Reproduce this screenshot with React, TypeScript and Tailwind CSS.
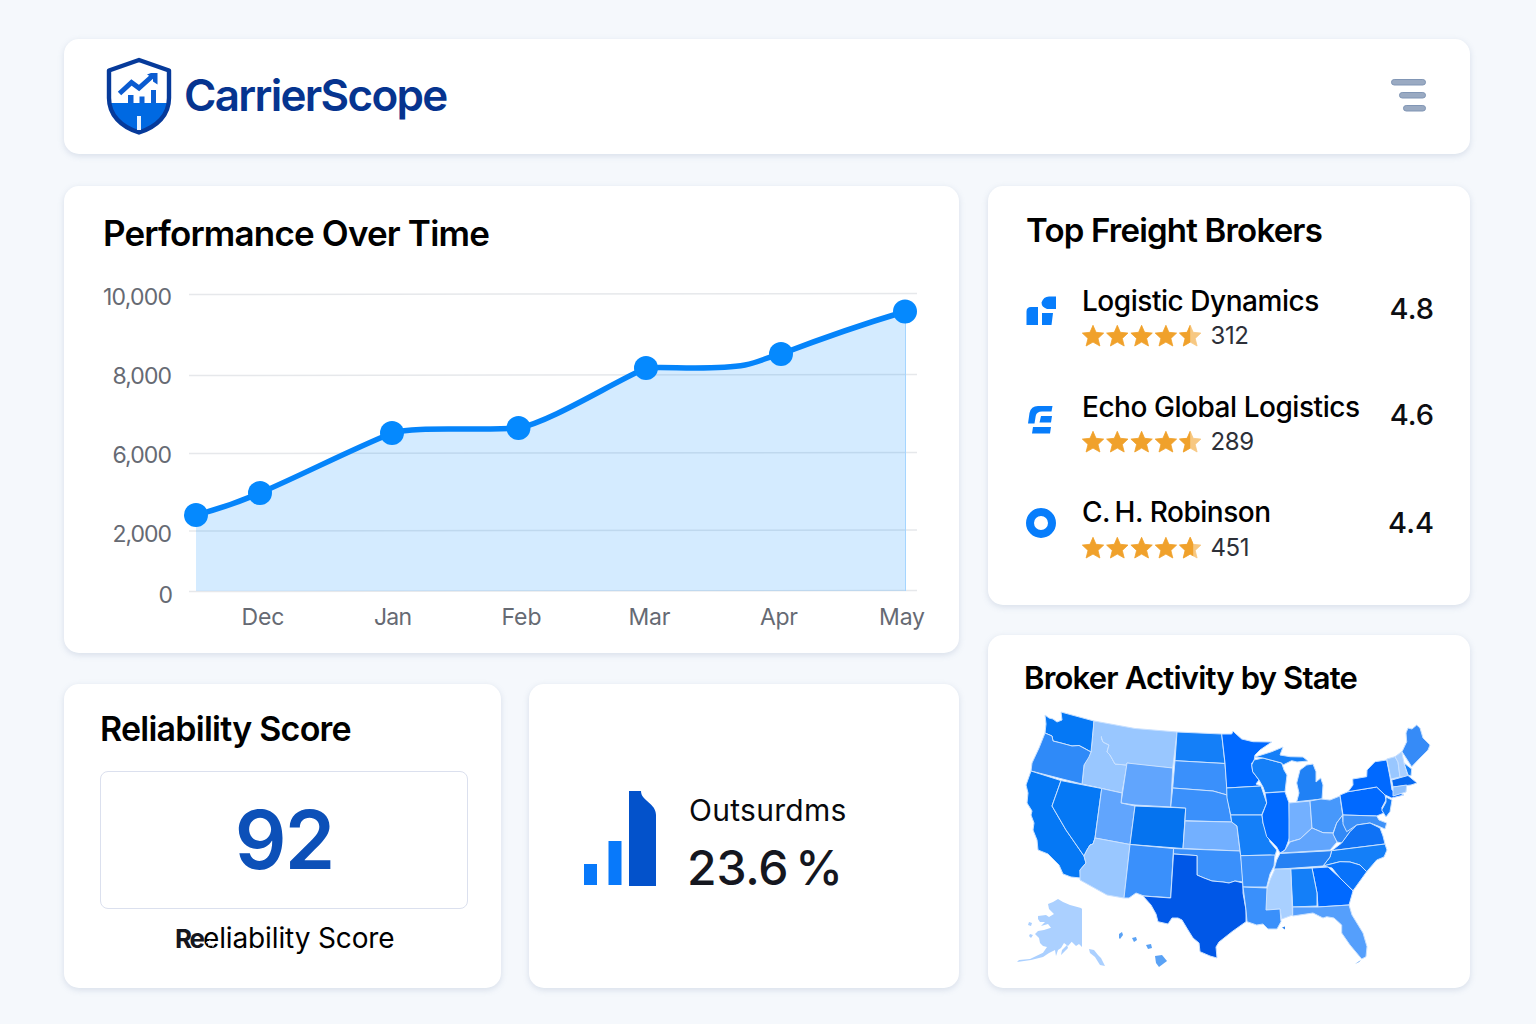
import React from "react";

const TICKS = [
  { label: "10,000", y: 305, w: 69, x: 103, line: 294.5 },
  { label: "8,000", y: 384, w: 59.5, x: 112.5, line: 375.5 },
  { label: "6,000", y: 463, w: 59.5, x: 112.5, line: 453.5 },
  { label: "2,000", y: 541.5, w: 59.5, x: 112.5, line: 531 },
  { label: "0", y: 603, w: 13.5, x: 158.5, line: 591.5 },
];
const MONTHS = [
  { label: "Dec", x: 263, w: 43 },
  { label: "Jan", x: 393, w: 38 },
  { label: "Feb", x: 521.5, w: 40 },
  { label: "Mar", x: 649.5, w: 42 },
  { label: "Apr", x: 779, w: 38 },
  { label: "May", x: 902, w: 46 },
];
const POINTS = [
  [196, 515],
  [260, 493],
  [392, 433],
  [518.5, 428],
  [646, 368],
  [781, 354],
  [905, 311.5],
];
const CURVE =
  "M196 515C219 509 239 502 260 493C306 473 346 452 392 433C418 426 464 431 518.5 428C550 422 612 383 646 368C664 366 712 371 745 365C760 362 770 356 781 354C815 341 870 322 905 311.5";

const LIGHT = "#99c7ff";
const SOFT = "#61a5fd";
const MID = "#3a90fb";
const STRONG = "#147ff8";
const BRIGHT = "#0069ff";

type Region = { id: string; fill: string; d: string };
const STATES: Region[] = [
  { id: "WA", fill: "#0578f5", d: "1045,715 1049,718 1053,719 1057,722 1062,720 1061,712 1094,721 1091,752 1084,748 1079,745.5 1072,746 1061,743 1053,741 1052,736 1045,733 1046,724" },
  { id: "OR", fill: "#2f8af8", d: "1045,733 1052,736 1053,741 1061,743 1072,746 1079,745.5 1091,752 1089,757 1084,765 1082,784 1031,771 1032,763 1039,748" },
  { id: "CA", fill: "#0578f5", d: "1031,771 1061,780.6 1052,806 1066,830 1084,856 1086,863 1080,870 1080.7,878 1071,877 1063,874 1059,865 1048,854 1038,850 1037,840 1033,830 1034,823 1031,815 1032,811 1027,803 1028,793 1026,785" },
  { id: "NV", fill: "#0578f5", d: "1061,780.6 1101.7,788.5 1095,838 1093,844 1090,845 1087,850 1084,856 1066,830 1052,806" },
  { id: "MT", fill: LIGHT, d: "1094,721 1135,728.5 1177,732 1172.7,768 1140,765 1127,763 1126,765 1115,764 1110,755 1107,752 1109,745 1103,742 1101,736 1093,735" },
  { id: "WY", fill: SOFT, d: "1127,763 1172.7,768 1170.7,807 1135,805 1121,803" },
  { id: "UT", fill: SOFT, d: "1101.7,788.5 1122,793 1121,803 1135,806 1130,844.5 1095,838" },
  { id: "CO", fill: "#0573ef", d: "1135,806 1185.7,808 1183,848.5 1130,844.5" },
  { id: "AZ", fill: LIGHT, d: "1095,838 1130,844.5 1124,898 1107,895 1080,880 1080,870 1086,863 1084,856 1087,850 1090,845 1093,844" },
  { id: "NM", fill: MID, d: "1130,844.5 1173.5,848.5 1170.7,897.7 1144,896 1136,893 1129,898 1124,898" },
  { id: "ND", fill: STRONG, d: "1177,732 1221.7,734 1225,763.5 1175,760.7" },
  { id: "SD", fill: MID, d: "1175,760.7 1225,763.5 1227,788 1227,795 1213,791 1172.7,788" },
  { id: "NE", fill: MID, d: "1172.7,788 1213,791 1227,795 1231.7,822 1185,820.7 1185.7,808 1170.7,807" },
  { id: "KS", fill: "#73b0ff", d: "1185,821 1231.7,822 1237,826 1240,851 1183,848.5" },
  { id: "OK", fill: MID, d: "1173.5,848.5 1240,851 1241.7,863 1243,882 1235,881 1229,883 1223,882 1212,881 1204,878 1197,875 1197,855.6 1173.5,854" },
  { id: "TX", fill: "#0057e7", d: "1173.5,854 1197,855.6 1197,875 1204,878 1212,881 1223,882 1229,883 1235,881 1243,883 1243,893 1246,910 1246,921.7 1232,931.7 1219,942 1216,947 1217,958 1210,956 1200,951.7 1199,943 1193,938 1188,930 1182,920 1178,918 1172,918 1168,924 1158,921.7 1156,914 1151,905 1143,896 1170.7,898" },
  { id: "MN", fill: BRIGHT, d: "1221.7,734 1231.7,734 1233,731 1235,733 1241.7,739 1253,741.7 1271.7,742 1260,750 1255,755 1254,761 1251.7,763 1252.7,771.7 1259,780 1256,784 1261,786 1226.7,788 1225,763" },
  { id: "WI", fill: STRONG, d: "1254,760 1263,758 1281.7,763 1284,770 1287,775 1285,791.7 1265,792.7 1263,787 1259,780 1252.7,771.7 1251.7,765" },
  { id: "UP", fill: STRONG, d: "1255,757 1271.7,751.7 1283,747 1280,755 1290,756.7 1303,757 1308,761 1297,762 1291.7,760.7 1283,765 1281.7,763 1263,758" },
  { id: "MI", fill: "#2081f5", d: "1306.7,765 1313,764 1316,771.7 1316,782 1320.7,778 1323,785 1322,799 1296.7,801.7 1299,793 1296.7,783 1300,770" },
  { id: "IA", fill: STRONG, d: "1226.7,788 1261,786 1264,795 1266.7,803 1261.7,815 1230.7,815 1227,798" },
  { id: "MO", fill: STRONG, d: "1230.7,815 1262,815 1263,823 1267,833 1270,842 1276.7,850 1275,856 1270,855 1240.7,855.7 1237,826 1231.7,822" },
  { id: "IL", fill: BRIGHT, d: "1265,793 1285,791.7 1289,803 1290,836.7 1285,850 1280,853 1276.7,847 1266.7,836.7 1263,823 1262,815 1266.7,803" },
  { id: "IN", fill: "#73b0ff", d: "1289,803 1310,801 1312,828 1300,839 1289,842" },
  { id: "OH", fill: "#4798fb", d: "1310,801 1321,799 1330,800 1340,796 1342.7,815 1336.7,823 1333,833 1323,832.7 1312,828" },
  { id: "KY", fill: SOFT, d: "1285,850 1290,842 1300,839 1312,828 1323,832.7 1333,833 1337,842 1330,850 1281,853" },
  { id: "WV", fill: "#3289f6", d: "1342.7,815 1343,822 1349,820 1356.7,825 1350,831.7 1342,843 1337,842 1333,834 1336.7,823" },
  { id: "PA", fill: BRIGHT, d: "1340,795 1348,791.7 1376.7,787 1385,795 1386,800 1381.7,808 1384,813 1376.7,816 1343,815" },
  { id: "NY", fill: BRIGHT, d: "1348,791.7 1353,785 1352.7,779 1366.7,776.7 1367,770 1375,761.7 1386.7,760 1390,777 1392,790 1404,795 1391.7,798 1385,795 1376.7,787" },
  { id: "NJ", fill: "#0f78f8", d: "1386,797 1392,800 1390,811.7 1386,817 1381.7,810 1386,802" },
  { id: "VT", fill: LIGHT, d: "1386.7,759 1395,756.7 1398,762 1400,777 1391,779" },
  { id: "NH", fill: "#a9cfff", d: "1395,756.7 1401.7,751.7 1404,763 1408,776.7 1400,777 1398,762" },
  { id: "ME", fill: "#368bf7", d: "1402,751.7 1406.7,741.7 1406,733 1408,728 1412,729 1416.7,725 1420,728 1423,738 1430,745 1428,750 1420,758 1411.7,766.7" },
  { id: "NHC", fill: STRONG, d: "1404,763 1411.7,769 1411,776 1408,775" },
  { id: "MA", fill: "#0668f0", d: "1391.7,780 1408,775.5 1411,778 1417,783 1411,785 1393,787" },
  { id: "CT", fill: "#8fc0fc", d: "1393,787 1406.7,785 1406,792 1393,796" },
  { id: "MD", fill: "#3e91f8", d: "1343,815 1376.7,816 1379,820 1386.7,823 1385,829 1378,826 1370,823 1356.7,825 1346.7,831.7 1343,824" },
  { id: "VA", fill: "#0f72f5", d: "1331.7,850.7 1341.7,843 1350,831.7 1356.7,825 1370,823 1380,828 1383,836 1385,844" },
  { id: "NC", fill: STRONG, d: "1331.7,850.7 1385,844 1387,850 1384,857 1376.7,860 1366.7,871.7 1360,865 1350,862 1340,861.7 1323,866 1330,857" },
  { id: "TN", fill: "#2681f3", d: "1280,853.5 1331.7,850.7 1330,857 1323,866 1274,869.5 1276.7,860" },
  { id: "SC", fill: "#0872fa", d: "1323,866 1340,861.7 1350,862 1360,865 1366.7,871.7 1353,890.7 1340,878 1332,868" },
  { id: "GA", fill: BRIGHT, d: "1312,868 1328,867 1340,878 1353,891 1349,905 1318,907 1317,893" },
  { id: "AL", fill: STRONG, d: "1290.7,869 1312,868 1317,893 1317,906 1292.7,907" },
  { id: "FL", fill: "#559ffc", d: "1292.7,907 1318,907 1349,905 1352,915 1363,933 1367,946.7 1366,956.7 1361.7,959 1350,945 1341.7,933 1341.7,925 1334,918 1326.7,916.7 1323,918 1313,913 1292.7,916" },
  { id: "MS", fill: "#a9d0ff", d: "1275,869 1290.7,869 1292.5,915 1281.7,919 1280,909 1266,910 1266.7,890 1270,880" },
  { id: "AR", fill: MID, d: "1240.7,855.7 1275,855 1274,866 1270,874 1266.7,887 1243,887" },
  { id: "LA", fill: MID, d: "1243,887 1267,888 1266,910 1280,909 1281,921.7 1277,929 1268,929 1263,924 1256.7,925 1247,921.7 1246,910" },
];

const ALASKA =
  "1048,904 1053,902 1058,899 1063,902 1070,905 1081,908 1082,909 1082,947 1079,944 1076,946 1071.7,941.7 1068,946 1064,943 1061,948 1058,950 1056,956 1055,950 1049,953 1043,957 1031,960 1017,962 1019,960 1030,959 1043,952.7 1047,947 1043,946 1040,943 1039,938 1035,934 1038,931 1044,930 1051,927.7 1048,924 1041,926 1045,922 1040,922 1038,919 1038,916 1046,915 1049,917 1054,914 1049,909";

const STAR =
  "M11 0.3L14 7.3L21.7 8.1L16 13.400L17.900 21L11 17.100L4.100 21L6 13.400L0.3 8.100L8 7.300Z";

const CARD =
  "rounded-[15px] bg-white shadow-[0_2px_6px_rgba(110,130,170,0.22)]";

function Stars({ cut }: { cut: number }) {
  return (
    <svg width="120" height="22" viewBox="0 0 120 22" className="shrink-0">
      {[0, 1, 2, 3].map((i) => (
        <path key={i} d={STAR} fill="#f0a12b" stroke="#f0a12b" strokeWidth="0.800" transform={`translate(${i * 24.3} 0)`} />
      ))}
      <g transform="translate(97.2 0)">
        <path d={STAR} fill="#f7c882" stroke="#f7c882" strokeWidth="0.800" />
        <svg width={cut} height="22">
          <path d={STAR} fill="#f0a12b" stroke="#f0a12b" strokeWidth="0.800" />
        </svg>
      </g>
    </svg>
  );
}

function Shield() {
  return (
    <svg width="66" height="78" viewBox="106 57 66 78" className="shrink-0">
      <path d="M139 60L169 70.500V98C169 115 157 127 139 132.500C121 127 109 115 109 98V70.500Z" fill="#fff" />
      <path d="M109 103H169C167 117 156 127 139 132C122 127 111 117 109 103Z" fill="#0069e2" />
      <path d="M139 60L169 70.500V98C169 115 157 127 139 132.500C121 127 109 115 109 98V70.500Z" fill="none" stroke="#063a9a" strokeWidth="4.400" strokeLinejoin="round" />
      <path d="M119.500 93.500L131.500 82.500L139 88L153 75.500" fill="none" stroke="#0b5bd0" strokeWidth="5" />
      <path d="M147 74.500L151 73H157.500V84.500L153 81.500V78Z" fill="#0b5bd0" />
      <path d="M128 95h5.500v8H128zM139.500 96.500h5v6.500h-5zM151 90h5v13h-5z" fill="#0b61d6" />
      <rect x="137" y="116" width="4" height="14" fill="#e9f3ff" />
    </svg>
  );
}

function MenuIcon() {
  return (
    <svg width="38" height="36" viewBox="1390 78 38 36" className="mb-[2px]">
      <g fill="#9aaac2" stroke="#8196b5">
        <rect x="1391.500" y="79.500" width="34" height="5.500" rx="2.700" />
        <rect x="1399.500" y="92.500" width="26" height="5.500" rx="2.700" />
        <rect x="1403.500" y="105.500" width="22" height="5.500" rx="2.700" />
      </g>
    </svg>
  );
}

function DynamicsLogo() {
  return (
    <svg width="30" height="30" viewBox="1026 296 30 30" className="mt-px">
      <path d="M1026.500 325V311.500Q1026.500 307 1031 307H1038V325Z M1042 313H1053L1051.500 325H1042Z M1056 296.500V309H1047Q1041.500 307 1041.500 302.500Q1043.500 296.500 1049 296.500Z" fill="#077dfb" />
    </svg>
  );
}

function EchoLogo() {
  return (
    <svg width="30" height="30" viewBox="1026 405 30 30" className="mt-[4px]">
      <path d="M1028 423.500L1029.500 413Q1031 406 1038 406H1052.500L1051.500 411.500H1042Q1036.500 411.500 1035.700 416L1034.500 423.500Z M1041 416H1052L1051 422.500H1039.500Z M1033 427H1051L1050 433.500H1032Z" fill="#077dfb" />
    </svg>
  );
}

function RingLogo() {
  return (
    <svg width="30" height="30" viewBox="0 0 30 30" className="mt-[2px]">
      <circle cx="15" cy="15" r="11" fill="none" stroke="#077dfb" strokeWidth="8" />
    </svg>
  );
}

type BrokerProps = {
  logo: React.ReactNode;
  name: string;
  count: string;
  score: string;
  cut: number;
  scoreOffset: string;
  ratingOffset: string;
};

function Broker({ logo, name, count, score, cut, scoreOffset, ratingOffset }: BrokerProps) {
  return (
    <div className="flex h-[60px] items-start">
      <div className="mt-[10px] w-14 shrink-0">{logo}</div>
      <div className="flex-1 whitespace-nowrap">
        <div className="h-8 text-[28px] leading-8 font-medium tracking-[-0.46px] text-black">{name}</div>
        <div className={`${ratingOffset} flex h-[22px] items-center gap-[8.5px]`}>
          <Stars cut={cut} />
          <span className="text-[24px] leading-[22px] tracking-[-0.4px] text-[#2d3038]">{count}</span>
        </div>
      </div>
      <div className={`${scoreOffset} text-[29px] leading-8 font-medium text-[#0d0e12]`}>{score}</div>
    </div>
  );
}

function PerformanceChart() {
  return (
    <svg width="895" height="370" viewBox="64 270 895 370" className="block">
      {TICKS.map((t) => (
        <g key={t.label}>
          <path d={`M189 ${t.line}L917 ${t.line - 1}`} stroke="#e6e8eb" strokeWidth="1.500" />
          <text x={t.x} y={t.y} textLength={t.w} fontSize="23" fill="#666a73">{t.label}</text>
        </g>
      ))}
      <path d={`${CURVE}V591H196Z`} fill="#0a8cff" fillOpacity="0.175" />
      <path d="M905.500 322V591" stroke="#a5d5ff" strokeWidth="1" />
      <path d={CURVE} fill="none" stroke="#0584fa" strokeWidth="5.500" />
      {POINTS.map(([x, y]) => (
        <circle key={x} cx={x} cy={y} r="12" fill="#0589fe" />
      ))}
      {MONTHS.map((m) => (
        <text key={m.label} x={m.x} y="625" textAnchor="middle" textLength={m.w} fontSize="23" fill="#666a73">{m.label}</text>
      ))}
    </svg>
  );
}

function StateMap() {
  return (
    <svg width="426" height="270" viewBox="1014 704 426 270" className="block">
      <polygon points="1094,721 1103,742 1109,745 1107,752 1110,755 1115,764 1127,765 1122,793 1082,784 1084,765 1091,752" fill={LIGHT} stroke="#d9eaff" />
      {STATES.map((s) => (
        <polygon key={s.id} points={s.d} fill={s.fill} stroke="#c9e1ff" strokeWidth="1" strokeLinejoin="round" />
      ))}
      <path d="M1094.500 722.500L1093.300 737L1100.500 738.500L1103 727Z" fill={LIGHT} />
      <polygon points={ALASKA} fill="#abd0ff" />
      <g fill="#abd0ff">
        <path d="M1029 922l3 1-1 3-3-1zM1030 934l3 1-2 3-2-2zM1062 950l5-5 1 3-7 7zM1089 949l5 1 4 5 3 3 4 8-5-1-5-8-5-4z" />
      </g>
      <g fill="#5aa2f5">
        <path d="M1119 934l3-2 1 3-3 4-1-1zM1132 938l4-1 1 3-3 2zM1146 945l5-1 1 4-4 1z" />
        <path d="M1155 956l7-1 5 6-8 6-3-4z" />
      </g>
      <path d="M1282 927.500l3-1 0 3zM1355 964l4-2 2-2" fill="#2d83ee" />
    </svg>
  );
}

export default function App() {
  return (
    <div className="h-[1024px] w-[1536px] overflow-hidden bg-[#f5f8fc] pt-[39px] pl-16 font-['Inter',sans-serif]">
      <header className={`${CARD} flex h-[115px] w-[1406px] items-center justify-between pr-[42px] pl-[42px]`}>
        <div className="mb-[2px] flex items-center gap-3">
          <Shield />
          <span className="mb-px text-[44px] leading-none font-semibold tracking-[-1.7px] text-[#06348f]">CarrierScope</span>
        </div>
        <MenuIcon />
      </header>

      <div className="mt-8 flex gap-[29px]">
        <div className="flex w-[895px] flex-col gap-[31px]">
          <section className={`${CARD} h-[467px]`}>
            <h2 className="h-[84px] pt-[25px] pl-[39px] text-[35px] leading-[44px] font-semibold tracking-[-0.83px] text-black">Performance Over Time</h2>
            <PerformanceChart />
          </section>
          <div className="flex gap-7">
            <section className={`${CARD} h-[304px] w-[437px] pt-[25px] pl-9`}>
              <h2 className="text-[34px] leading-10 font-semibold tracking-[-0.76px] text-black">Reliability Score</h2>
              <div className="mt-[22px] flex h-[138px] w-[368px] items-center justify-center rounded-lg border border-[#dbe0ee] text-[81px] leading-none font-semibold tracking-[-2px] text-[#0c50b8]">
                92
              </div>
              <div className="relative mt-[11px] flex h-9 w-[368px] items-baseline pl-[75px] text-[28px] leading-9 whitespace-nowrap text-black">
                <span className="w-[28px] text-[26px] font-bold tracking-[-2.2px] text-[#15171f]">Re</span>
                <span className="tracking-[-0.13px]">eliability Score</span>
                <svg width="12" height="10" viewBox="0 0 14 12" className="absolute top-[18px] left-[105px]">
                  <path d="M1 6L6 3L4 9L11 6L9 11" fill="none" stroke="#fff" strokeWidth="1" />
                </svg>
              </div>
            </section>
            <section className={`${CARD} flex h-[304px] w-[430px] pl-[55px]`}>
              <svg width="73" height="96" viewBox="584 791 73 96" className="mt-[107px]">
                <path d="M584 864h13v21h-13zM608.500 841h13v44h-13z" fill="#0879fa" />
                <path d="M629 791H641C641 801 656 803 656 815V886H629Z" fill="#0352cb" />
              </svg>
              <div className="mt-[106px] ml-8 whitespace-nowrap">
                <div className="text-[30px] leading-10 tracking-[0.3px] text-[#08090d]">Outsurdms</div>
                <div className="mt-[8px] -ml-[2px] text-[48px] leading-[60px] font-medium tracking-[-0.2px] text-[#15171f]">23.6<span className="ml-[7px]">%</span></div>
              </div>
            </section>
          </div>
        </div>

        <div className="flex w-[482px] flex-col gap-[30px]">
          <section className={`${CARD} h-[419px] pr-9 pl-[38px]`}>
            <h2 className="pt-[24px] text-[33px] leading-10 font-semibold tracking-[-0.8px] text-black">Top Freight Brokers</h2>
            <div className="mt-[35px] flex flex-col gap-[45.500px]">
              <Broker logo={<DynamicsLogo />} name="Logistic Dynamics" count="312" score="4.8" cut={11} scoreOffset="mt-[8px]" ratingOffset="mt-[8px]" />
              <Broker logo={<EchoLogo />} name="Echo Global Logistics" count="289" score="4.6" cut={11} scoreOffset="mt-[8px]" ratingOffset="mt-[8px]" />
              <Broker logo={<RingLogo />} name={"C.\u2009H. Robinson"} count="451" score="4.4" cut={14} scoreOffset="mt-[11px]" ratingOffset="mt-[9px]" />
            </div>
          </section>
          <section className={`${CARD} h-[353px]`}>
            <h2 className="h-[69px] pt-[23px] pl-9 text-[31px] leading-10 font-semibold tracking-[-0.8px] text-black">Broker Activity by State</h2>
            <div className="pl-[26px]">
              <StateMap />
            </div>
          </section>
        </div>
      </div>
    </div>
  );
}
